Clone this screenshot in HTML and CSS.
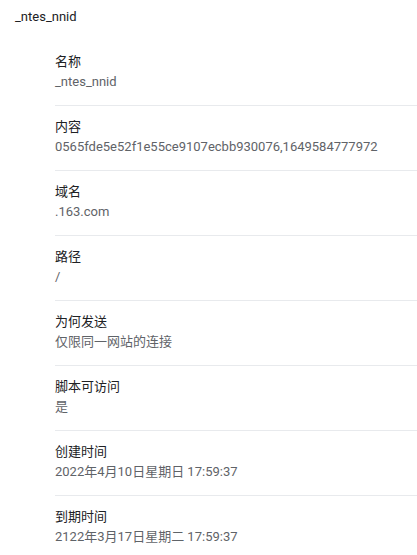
FILE: index.html
```html
<!DOCTYPE html>
<html lang="zh-CN">
<head>
<meta charset="utf-8">
<title>_ntes_nnid</title>
<link rel="stylesheet" href="styles.css">
</head>
<body>
<div class="page">
  <div class="title">_ntes_nnid</div>
  <div class="list">
    <div class="row">
      <div class="label">名称</div>
      <div class="value">_ntes_nnid</div>
    </div>
    <div class="row">
      <div class="label">内容</div>
      <div class="value">0565fde5e52f1e55ce9107ecbb930076,1649584777972</div>
    </div>
    <div class="row">
      <div class="label">域名</div>
      <div class="value">.163.com</div>
    </div>
    <div class="row">
      <div class="label">路径</div>
      <div class="value">/</div>
    </div>
    <div class="row">
      <div class="label">为何发送</div>
      <div class="value">仅限同一网站的连接</div>
    </div>
    <div class="row">
      <div class="label">脚本可访问</div>
      <div class="value">是</div>
    </div>
    <div class="row">
      <div class="label">创建时间</div>
      <div class="value">2022年4月10日星期日 17:59:37</div>
    </div>
    <div class="row">
      <div class="label">到期时间</div>
      <div class="value">2122年3月17日星期二 17:59:37</div>
    </div>
  </div>
</div>
</body>
</html>
```
FILE: styles.css
```css
html, body {
  margin: 0;
  padding: 0;
  background: #ffffff;
}
body {
  font-family: Roboto, "Noto Sans CJK SC", sans-serif;
  font-size: 13px;
  line-height: 20px;
  color: #202124;
}
.page {
  display: flex;
  flex-direction: column;
}
.title {
  padding: 7px 15px 0;
  height: 20px;
  color: #202124;
}
.list {
  display: flex;
  flex-direction: column;
  margin-left: 55px;
  padding-top: 25px;
}
.row {
  display: flex;
  flex-direction: column;
  padding: 11px 0 13px;
  border-top: 1px solid #e8eaed;
}
.row:first-child {
  border-top: none;
  padding-top: 0;
}
.label {
  color: #202124;
}
.value {
  color: #5f6368;
}
```
